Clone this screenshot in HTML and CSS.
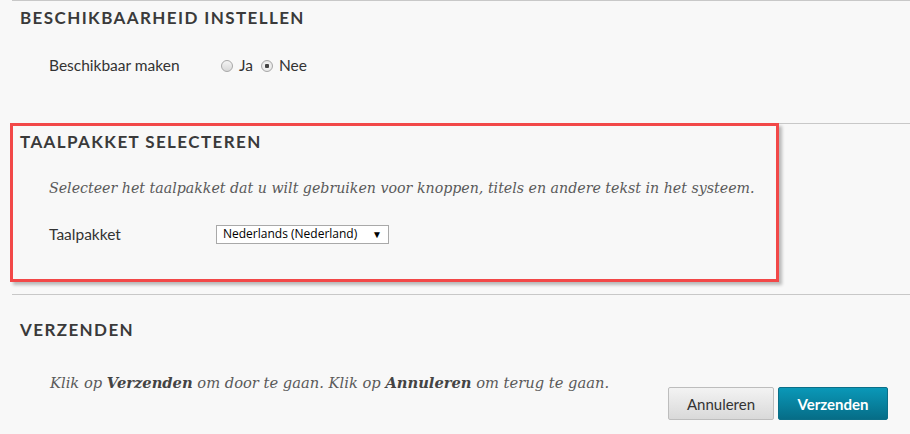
FILE: index.html
```html
<!DOCTYPE html>
<html lang="nl">
<head>
  <meta charset="UTF-8" />
  <title>Taalpakket instellen</title>
  <link rel="stylesheet" href="styles.css">
</head>
<body>
  <div class="page">
    <!-- Beschikbaarheid -->
    <section class="step step-first">
      <h2>Beschikbaarheid instellen</h2>
      <div class="field">
        <span class="field-label">Beschikbaar maken</span>
        <label class="radio"><input type="radio" name="avail" /> Ja</label>
        <label class="radio"><input type="radio" name="avail" checked /> Nee</label>
      </div>
    </section>

    <!-- Taalpakket -->
    <section class="step step-lang">
      <h2>Taalpakket selecteren</h2>
      <p class="instructions">Selecteer het taalpakket dat u wilt gebruiken voor knoppen, titels en andere tekst in het systeem.</p>
      <div class="field">
        <span class="field-label">Taalpakket</span>
        <div class="select">
          <span>Nederlands (Nederland)</span>
          <span class="arrow">&#9660;</span>
        </div>
      </div>
      <div class="highlight"></div>
    </section>

    <!-- Verzenden -->
    <section class="step step-submit">
      <h2>Verzenden</h2>
      <div class="submit-row">
        <p class="instructions">Klik op <b>Verzenden</b> om door te gaan. Klik op <b>Annuleren</b> om terug te gaan.</p>
        <div class="buttons">
          <button class="btn btn-cancel">Annuleren</button>
          <button class="btn btn-submit">Verzenden</button>
        </div>
      </div>
    </section>
  </div>
</body>
</html>
```

FILE: styles.css
```css
body {
  margin: 0;
  padding: 0;
  background: #f8f8f8;
  font-family: Lato, "Open Sans", sans-serif;
  color: #333;
}

.page {
  padding-left: 12px;
}

.step {
  border-top: 1px solid #c8c8c8;
  padding: 0 8px;
  box-sizing: border-box;
}

.step h2 {
  margin: 0;
  font-size: 17px;
  line-height: 20px;
  font-weight: bold;
  text-transform: uppercase;
  letter-spacing: 1.4px;
  color: #3a3a3a;
}

.step-first {
  height: 123px;
  padding-top: 7px;
}

.step-first .field {
  margin-top: 27px;
}

.step-lang {
  position: relative;
  height: 171px;
  padding-top: 8px;
}

.step-submit {
  height: 140px;
  padding-top: 25px;
}

.field {
  display: flex;
  align-items: center;
  padding-left: 29px;
  font-size: 15.5px;
  line-height: 20px;
}

.field-label {
  width: 167px;
  flex-shrink: 0;
}

.radio {
  display: flex;
  align-items: center;
  margin-right: 3px;
}

.radio input {
  appearance: none;
  width: 12px;
  height: 12px;
  margin: 2px 6px 0 5px;
  border: 1px solid #a8a8a8;
  border-radius: 50%;
  background: linear-gradient(#f4f4f4, #d8d8d8);
  box-sizing: border-box;
}

.radio input:checked {
  background: radial-gradient(circle, #444 0, #444 2px, #f2f2f2 2.5px, #dcdcdc 100%);
}

.instructions {
  margin: 0;
  padding-left: 29px;
  font-family: "DejaVu Serif", Georgia, serif;
  font-style: italic;
  font-size: 14.2px;
  line-height: 20px;
  color: #5a5a5a;
}

.step-lang .instructions {
  margin-top: 26px;
}

.step-lang .field {
  margin-top: 26px;
}

.select {
  display: flex;
  justify-content: space-between;
  align-items: center;
  width: 173px;
  height: 19px;
  padding: 0 6px;
  box-sizing: border-box;
  border: 1px solid #a9a9a9;
  background: #fff;
  font-family: "Open Sans", "Noto Sans", sans-serif;
  font-size: 12px;
  color: #000;
}

.select .arrow {
  font-size: 10px;
}

.highlight {
  position: absolute;
  left: -2px;
  top: -1px;
  width: 769px;
  height: 159px;
  box-sizing: border-box;
  border: 3px solid #f24848;
  box-shadow: 3px 3px 3px rgba(0, 0, 0, 0.25);
  pointer-events: none;
}

.submit-row {
  display: flex;
  justify-content: space-between;
  align-items: flex-start;
  margin-top: 33px;
  padding-right: 14px;
}

.step-submit .instructions {
  padding-left: 30px;
  font-size: 14.7px;
}

.instructions b {
  color: #444;
}

.buttons {
  display: flex;
  gap: 4px;
  margin-top: 14px;
}

.btn {
  height: 33px;
  padding: 0 16px;
  border-radius: 2px;
  font-family: Lato, sans-serif;
  font-size: 15px;
  cursor: pointer;
}

.btn-cancel {
  width: 106px;
  border: 1px solid #bdbdbd;
  background: linear-gradient(#f3f3f3, #d9d9d9);
  color: #333;
}

.btn-submit {
  width: 110px;
  border: 1px solid #0b6f88;
  background: linear-gradient(#0a98b8, #066d87);
  color: #fff;
  font-weight: bold;
}
```
